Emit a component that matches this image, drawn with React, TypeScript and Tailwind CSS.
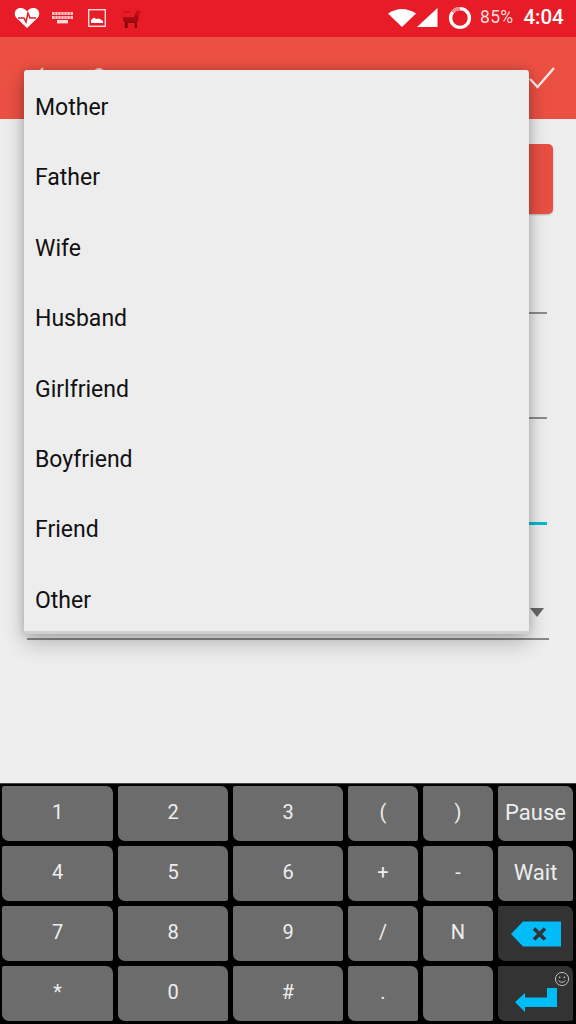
import React from "react";

const font = { fontFamily: "Roboto, sans-serif" };
const items = ["Mother", "Father", "Wife", "Husband", "Girlfriend", "Boyfriend", "Friend", "Other"];
const rows = [
  ["1", "2", "3", "(", ")", "Pause"],
  ["4", "5", "6", "+", "-", "Wait"],
  ["7", "8", "9", "/", "N", "DEL"],
  ["*", "0", "#", ".", "", "ENT"],
];
const cols = ["w-[111px]", "w-[110px]", "w-[110px]", "w-[70px]", "w-[70px]", "w-[75px]"];

function Key({ label, cls }: { label: string; cls: string }) {
  const dark = label === "DEL" || label === "ENT";
  return (
    <div
      className={`${cls} relative h-[55px] flex items-center justify-center rounded-tr-[7px] rounded-bl-[7px] rounded-tl-[2px] rounded-br-[2px] text-[#eeeeee] ${
        dark ? "bg-[#333333]" : "bg-[#6c6c6c]"
      } ${label.length > 1 && !dark ? "text-[22px]" : "text-[20px]"}`}
    >
      {label === "DEL" ? (
        <svg width="50" height="26" viewBox="0 0 50 26">
          <path d="M0 13 L12 0.5 H50 V25.5 H12 Z" fill="#00bcf8" />
          <path d="M23 7.5 L34 18.5 M34 7.5 L23 18.5" stroke="#333333" strokeWidth="3.6" />
        </svg>
      ) : label === "ENT" ? (
        <>
          <svg width="42" height="26" viewBox="0 0 42 26" className="mt-[13px]">
            <path d="M0 15 L10 6 V10.5 H32 V1 H42 V20 H10 V25 Z" fill="#00bcf8" />
          </svg>
          <svg width="16" height="16" viewBox="0 0 16 16" className="absolute top-[5px] right-[3px]">
            <circle cx="8" cy="8" r="6.6" fill="none" stroke="#bdbdbd" strokeWidth="1" />
            <circle cx="5.6" cy="6.3" r="0.9" fill="#bdbdbd" />
            <circle cx="10.4" cy="6.3" r="0.9" fill="#bdbdbd" />
            <path d="M4.5 9.6 Q8 13 11.5 9.6" fill="none" stroke="#bdbdbd" strokeWidth="1" />
          </svg>
        </>
      ) : (
        <span className="mt-[-3px]">{label}</span>
      )}
    </div>
  );
}

function StatusBar() {
  return (
    <div className="h-[37px] bg-[#e81c27] flex items-center text-white">
      <svg width="26" height="22" viewBox="0 0 26 22" className="ml-[14px] mt-[-2px]">
        <path d="M13 21 L2.5 11 C-1 7 1 1 6.5 1 C9.5 1 11.5 2.5 13 4.5 C14.5 2.5 16.5 1 19.5 1 C25 1 27 7 23.5 11 Z" fill="#fff" />
        <path d="M4 11 H10 L12 15 L14 6 L16 11 H22" fill="none" stroke="#e81c27" strokeWidth="1.5" />
      </svg>
      <svg width="21" height="12" viewBox="0 0 21 12" className="ml-[12px] mt-[-1px]">
        <g fill="#fde3e3">
          <rect x="0" y="0" width="21" height="3" opacity=".85" />
          <rect x="0" y="4" width="21" height="3" opacity=".85" />
          <rect x="5" y="8" width="11" height="3.4" opacity=".95" />
        </g>
        <g stroke="#e81c27" strokeWidth=".6">
          <path d="M3 0V7M6 0V7M9 0V7M12 0V7M15 0V7M18 0V7" />
        </g>
      </svg>
      <svg width="18" height="18" viewBox="0 0 18 18" className="ml-[15px] mt-[-1px]">
        <rect x="0.7" y="0.7" width="16.6" height="16.6" fill="none" stroke="#fbdcdc" strokeWidth="1.4" />
        <path d="M3 14 V11 L6 8.5 L8 10 L11 9.5 L15 12 V14 Z" fill="#fff" />
      </svg>
      <svg width="20" height="21" viewBox="0 0 20 21" className="ml-[16px] mt-[-1px]">
        <defs>
          <linearGradient id="llama" x1="0" y1="0" x2="0" y2="1">
            <stop offset="0" stopColor="#d8101a" />
            <stop offset="1" stopColor="#7a0608" />
          </linearGradient>
        </defs>
        <path d="M1 3 H8 V4.5 H1 Z" fill="#c8101a" />
        <path d="M1 9 H12 L14 4 L15 1 L17 3 L20 4 L17 5.5 L16.5 12 L15 14 V20 H13 L12.5 15 H6 L5.5 20 H3 L2.5 14 L1 12 Z" fill="url(#llama)" />
      </svg>
      <svg width="30" height="20" viewBox="0 0 30 20" className="ml-[245px] mt-[-1px]">
        <path d="M1 5.5 Q15 -3.5 29 5.5 L15 19 Z" fill="#fff" />
      </svg>
      <svg width="21" height="20" viewBox="0 0 21 20" className="mt-[-1px]">
        <path d="M0 19 L20.5 0 V19 Z" fill="#fff" />
      </svg>
      <svg width="24" height="24" viewBox="0 0 24 24" className="ml-[10px] mt-[-2px]">
        <circle cx="12" cy="12" r="9.4" fill="none" stroke="#fff" strokeWidth="3.4" />
        <path d="M12 2.6 A9.4 9.4 0 0 0 4.5 6.2" fill="none" stroke="#f08a8e" strokeWidth="3.4" />
      </svg>
      <span className="ml-[8px] text-[17.5px] text-[#fbdcdc] tracking-[0.3px] mt-[-2px]">85%</span>
      <span className="ml-[10px] text-[20.5px] font-medium mt-[-2px]">4:04</span>
    </div>
  );
}

export default function App() {
  return (
    <div className="relative w-[576px] h-[1024px] overflow-hidden bg-[#eeeeee] flex flex-col" style={font}>
      <StatusBar />
      <div className="h-[82px] bg-[#ec5043] flex items-start justify-between pl-[34px] pr-[21px] pt-[30px]">
        <div className="flex items-start gap-[44px]">
          <svg width="14" height="10" viewBox="0 0 14 10"><path d="M2 9 L9 1" stroke="#f8cfcb" strokeWidth="2" fill="none" /></svg>
          <svg width="14" height="10" viewBox="0 0 14 10"><circle cx="7" cy="7" r="6" fill="#f8cfcb" /></svg>
        </div>
        <svg width="26" height="22" viewBox="0 0 26 22">
          <path d="M1 12 L8.5 20 L25 1" fill="none" stroke="#f3ecea" strokeWidth="2.4" />
        </svg>
      </div>

      <div className="flex-1 flex flex-col items-end pt-[25px] pr-[29px]">
        <div className="w-[60px] h-[70px] mr-[-6px] bg-[#e94f43] rounded-[5px] shadow-[0_1px_2px_rgba(0,0,0,0.25)]" />
        <div className="w-[60px] h-[2px] mt-[98px] bg-[#8c8c8c]" />
        <div className="w-[60px] h-[2px] mt-[103px] bg-[#8c8c8c]" />
        <div className="w-[60px] h-[3px] mt-[103px] bg-[#00bcd4]" />
        <div className="mt-[83px] mr-[3px] w-0 h-0 border-x-[7.5px] border-x-transparent border-t-[9px] border-t-[#666666]" />
        <div className="w-[522px] h-[2px] mt-[21px] mr-[-2px] bg-[#8a8a8a]" />
      </div>

      <div className="h-[241px] shrink-0 bg-black border-t border-t-[#444444] pt-[2px] pl-[2px] flex flex-col gap-[5px]">
        {rows.map((r, i) => (
          <div key={i} className="flex gap-[5px]">
            {r.map((k, j) => (
              <Key key={j} label={k} cls={cols[j]} />
            ))}
          </div>
        ))}
      </div>

      <div className="absolute left-[24px] top-[70px] w-[505px] h-[564px] overflow-hidden bg-[#ededed] rounded-[3px] border-b-[3px] border-b-[#d0d0d0] pt-[3px] shadow-[0_9px_22px_rgba(0,0,0,0.24),0_0_10px_rgba(0,0,0,0.18)]">
        {items.map((t) => (
          <div key={t} className="h-[70.4px] flex items-center pl-[11px] text-[23px] text-[#111111]">
            {t}
          </div>
        ))}
      </div>
    </div>
  );
}
